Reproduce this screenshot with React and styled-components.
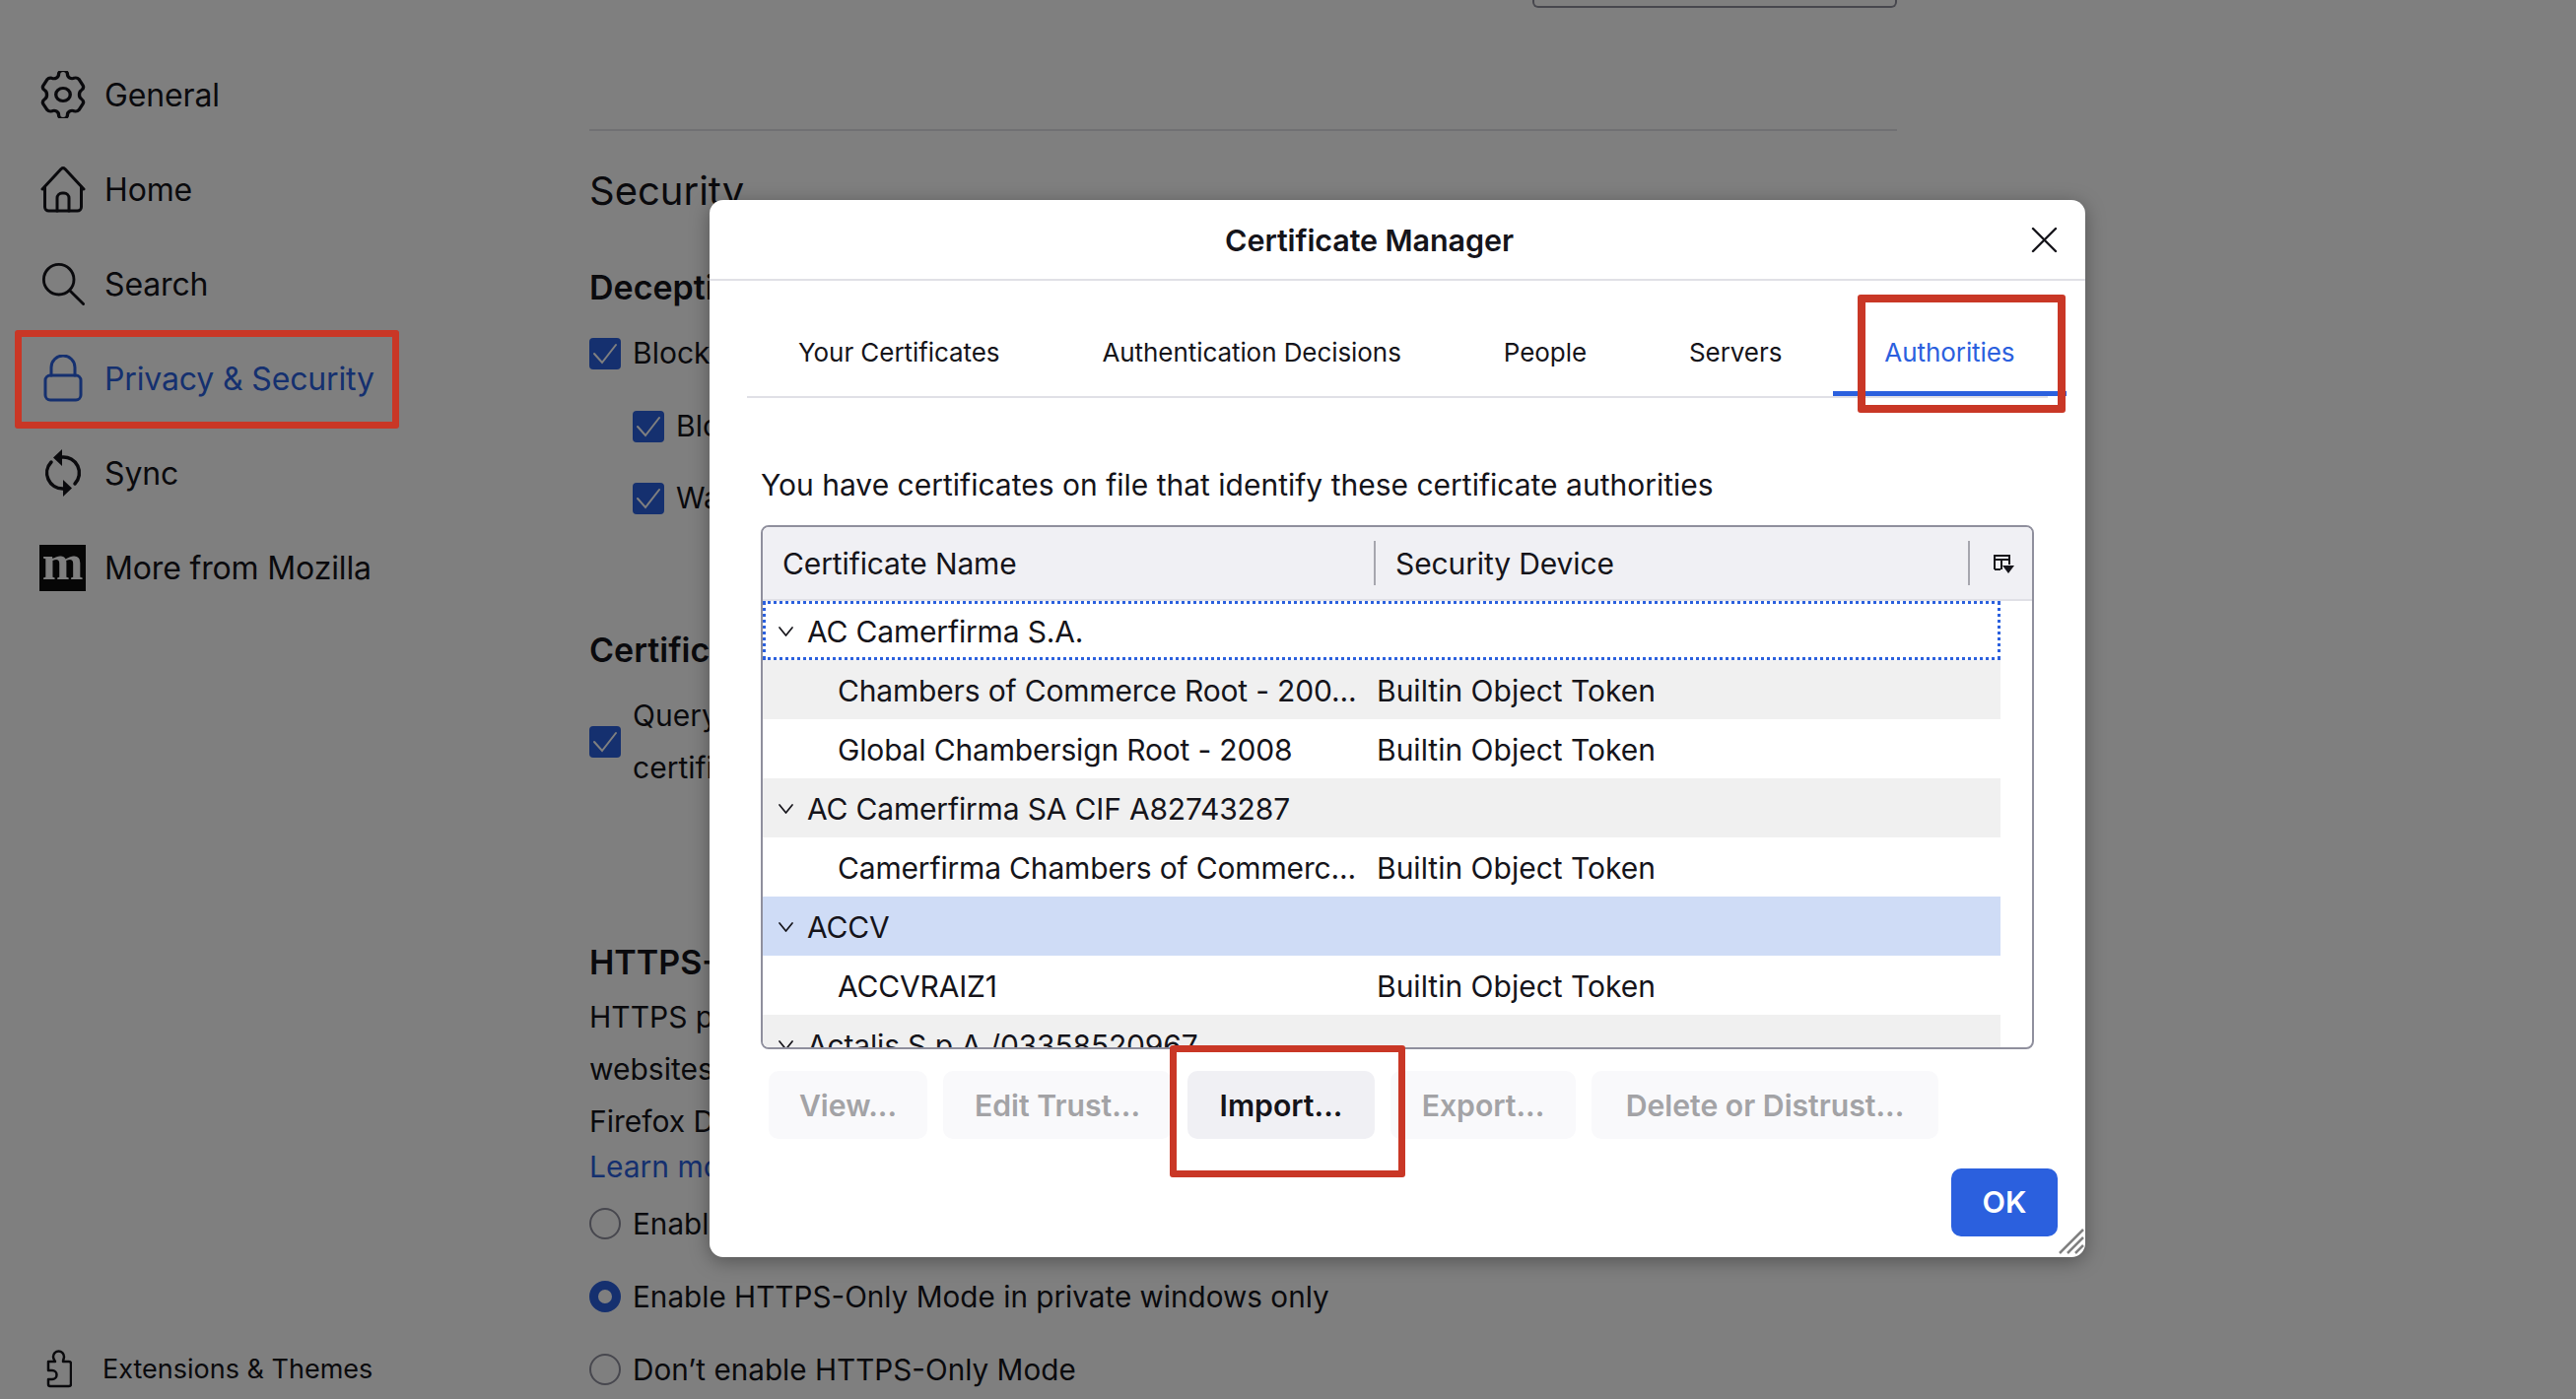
import React from "react";
import styled, { createGlobalStyle } from "styled-components";

const Global = createGlobalStyle`
  html, body { margin: 0; padding: 0; background: #fff; }
  body { font-family: Inter, "Liberation Sans", sans-serif; color: #15141a; }
  * { box-sizing: border-box; }
`;

const Page = styled.div`
  position: relative;
  width: 2614px;
  height: 1420px;
  overflow: hidden;
  background: #fff;
  display: grid;
  grid-template-columns: 598px 1327px 1fr;
`;

const Sidebar = styled.aside`
  display: flex;
  flex-direction: column;
  height: 1420px;
  padding: 48px 0 0 40px;
`;
const Nav = styled.nav`
  display: flex;
  flex-direction: column;
`;
const NavItem = styled.div`
  display: flex;
  align-items: center;
  height: 96px;
  font-size: 32px;
  letter-spacing: -0.15px;
  padding-top: 1px;
  color: ${(p) => (p.$active ? "#2b60de" : "#15141a")};
`;
const NavIcon = styled.span`
  display: flex;
  align-items: center;
  justify-content: center;
  width: 47px;
  height: 60px;
  margin-right: 19px;
  margin-top: -1px;
`;
const MozLogo = styled.span`
  display: flex;
  align-items: center;
  justify-content: center;
  width: 48px;
  height: 47px;
  background: #0c0c0d;
  color: #fff;
  font-family: "Liberation Serif", serif;
  font-weight: 700;
  font-size: 50px;
  line-height: 1;
  letter-spacing: 0;
  padding-bottom: 11px;
`;
const Footer = styled.div`
  margin-top: auto;
  display: flex;
  align-items: center;
  height: 40px;
  margin-bottom: 11px;
  padding-left: 7px;
  font-size: 27px;
  color: #15141a;
`;
const FooterIcon = styled.span`
  display: flex;
  width: 57px;
`;

const Main = styled.main`
  display: flex;
  flex-direction: column;
`;
const TopBox = styled.div`
  align-self: flex-end;
  width: 370px;
  height: 8px;
  border: 2px solid #8f8f9d;
  border-top: none;
  border-radius: 0 0 6px 6px;
`;
const Rule = styled.hr`
  width: 100%;
  height: 2px;
  margin: 123px 0 0;
  border: none;
  background: #e0e0e6;
`;
const H2 = styled.h2`
  margin: 34px 0 0;
  font-weight: 400;
  font-size: 40px;
  line-height: 54px;
`;
const H3 = styled.h3`
  margin: ${(p) => p.$mt || 0}px 0 0;
  font-weight: 600;
  font-size: 34px;
  line-height: 44px;
`;
const Check = styled.div`
  display: flex;
  align-items: center;
  gap: 12px;
  margin: ${(p) => p.$mt || 0}px 0 0 ${(p) => (p.$sub ? 44 : 0)}px;
  font-size: 30px;
  line-height: 53px;
`;
const Box = styled.span`
  flex: none;
  width: 32px;
  height: 32px;
  border-radius: 4px;
  background: #2b60de;
  display: flex;
  align-items: center;
  justify-content: center;
`;
const Para = styled.p`
  margin: ${(p) => p.$mt || 0}px 0 0;
  width: 1300px;
  font-size: 30px;
  line-height: 53px;
`;
const Link = styled.div`
  margin-top: -3px;
  font-size: 30px;
  line-height: 44px;
  color: #2b60de;
`;
const RadioRow = styled.div`
  display: flex;
  align-items: center;
  gap: 12px;
  height: 44px;
  margin-top: ${(p) => p.$mt || 0}px;
  font-size: 29.7px;
`;
const Radio = styled.span`
  flex: none;
  width: 32px;
  height: 32px;
  border-radius: 50%;
  border: ${(p) => (p.$on ? "9px solid #2b60de" : "2px solid #8f8f9d")};
`;

const Overlay = styled.div`
  position: absolute;
  inset: 0;
  background: rgba(0, 0, 0, 0.5);
`;
const Dialog = styled.div`
  position: absolute;
  left: 720px;
  top: 203px;
  width: 1396px;
  height: 1073px;
  background: #fff;
  border-radius: 14px;
  box-shadow: 0 4px 20px rgba(0, 0, 0, 0.35);
  display: flex;
  flex-direction: column;
  overflow: hidden;
`;
const DialogHead = styled.header`
  flex: none;
  height: 82px;
  display: flex;
  align-items: center;
  border-bottom: 2px solid #e0e0e6;
`;
const Title = styled.h1`
  flex: 1;
  margin: 0;
  text-align: center;
  font-size: 30.5px;
  font-weight: 600;
  letter-spacing: -0.1px;
`;
const Close = styled.button`
  flex: none;
  width: 57px;
  height: 40px;
  padding: 0 0 0 2px;
  border: none;
  background: none;
  color: #15141a;
  display: flex;
  align-items: center;
  justify-content: flex-start;
`;
const TabBar = styled.div`
  flex: none;
  display: flex;
  height: 119px;
  width: 1320px;
  margin-left: 38px;
  border-bottom: 2px solid #e0e0e6;
`;
const Tab = styled.div`
  flex: none;
  display: flex;
  align-items: center;
  height: 117px;
  padding: ${(p) => (p.$active ? 32 : 27)}px 52px 0;
  font-size: 26px;
  letter-spacing: -0.07px;
  white-space: nowrap;
  ${(p) => p.$active && "color: #2b60de; border-bottom: 5px solid #2b60de;"}
`;
const Lead = styled.p`
  margin: 68px 0 0 52px;
  font-size: 30px;
  line-height: 40px;
`;
const Tree = styled.div`
  flex: none;
  width: 1292px;
  height: 532px;
  margin: 21px 0 0 52px;
  border: 2px solid #8f8f9d;
  border-radius: 8px;
  overflow: hidden;
`;
const TreeHead = styled.div`
  height: 75px;
  display: flex;
  align-items: center;
  background: #f0f0f4;
  border-bottom: 2px solid #e0e0e6;
  font-size: 30px;
  letter-spacing: -0.12px;
`;
const HeadCell = styled.div`
  flex: none;
  width: ${(p) => p.$w}px;
  padding-left: ${(p) => p.$pad}px;
`;
const HeadRule = styled.span`
  flex: none;
  width: 2px;
  height: 45px;
  background: #a6a6ae;
`;
const HeadIcon = styled.span`
  display: flex;
  margin-left: 24px;
`;
const Rows = styled.div`
  width: 1256px;
`;
const Row = styled.div`
  position: relative;
  display: grid;
  grid-template-columns: 623px 1fr;
  align-items: center;
  height: 60px;
  padding-top: 2px;
  font-size: 30px;
  white-space: nowrap;
  background: ${(p) => (p.$selected ? "#cfdcf6" : p.$striped ? "#f0f0f0" : "#fff")};
  ${(p) => p.$focused && "outline: 3px dotted #2b60de; outline-offset: -3px;"}
`;
const Name = styled.div`
  display: flex;
  align-items: center;
  letter-spacing: -0.17px;
  padding-left: ${(p) => (p.$child ? 76 : 15)}px;
`;
const Chevron = styled.span`
  display: flex;
  width: 30px;
  flex: none;
`;
const Actions = styled.div`
  flex: none;
  display: flex;
  gap: 16px;
  margin: 22px 0 0 60px;
`;
const ActionBtn = styled.button`
  flex: none;
  height: 69px;
  padding: 0;
  width: ${(p) => p.$w}px;
  border: none;
  border-radius: 10px;
  font-family: inherit;
  font-size: 30.2px;
  font-weight: 600;
  background: ${(p) => (p.$disabled ? "#f9f9fb" : "#f0f0f4")};
  color: ${(p) => (p.$disabled ? "#a3a3a6" : "#15141a")};
`;
const DialogFoot = styled.div`
  flex: none;
  display: flex;
  justify-content: flex-end;
  margin: 30px 28px 0 0;
`;
const Ok = styled.button`
  width: 108px;
  height: 69px;
  padding: 0 0 2px;
  border: none;
  border-radius: 10px;
  background: #2b60de;
  color: #fff;
  font-family: inherit;
  font-size: 30.5px;
  font-weight: 600;
`;
const Grip = styled.svg`
  position: absolute;
  right: 1px;
  bottom: 3px;
`;
const Mark = styled.div`
  position: absolute;
  left: ${(p) => p.$x}px;
  top: ${(p) => p.$y}px;
  width: ${(p) => p.$w}px;
  height: ${(p) => p.$h}px;
  border: ${(p) => p.$b || 7}px solid #c93726;
  border-radius: 3px;
`;

const ic = { fill: "none", stroke: "currentColor", strokeWidth: 3, strokeLinecap: "round", strokeLinejoin: "round" };

const Gear = () => (
  <svg width="46" height="48" viewBox="2.500 0 41 48" preserveAspectRatio="none" {...ic}>
    <circle cx="23" cy="24" r="6.5" />
    <path d="M19 3.5a4 4 0 0 1 8 0c0 3.2 3.4 5.2 6.2 3.6a4 4 0 0 1 4.2 1.4l3.6 6.2a4 4 0 0 1-1.3 4.7c-2.7 1.7-2.7 7.5 0 9.2a4 4 0 0 1 1.3 4.7l-3.6 6.2a4 4 0 0 1-4.2 1.4c-2.8-1.6-6.2.4-6.2 3.6a4 4 0 0 1-8 0c0-3.2-3.4-5.2-6.2-3.6a4 4 0 0 1-4.2-1.4L5 33.5a4 4 0 0 1 1.3-4.7c2.7-1.7 2.7-7.500 0-9.2A4 4 0 0 1 5 14.900l3.6-6.2a4 4 0 0 1 4.2-1.4C15.6 8.7 19 6.700 19 3.5z" />
  </svg>
);
const HomeIcon = () => (
  <svg width="46" height="48" viewBox="0 0 46 48" {...ic}>
    <path d="M2 24 21 3.500a3 3 0 0 1 4 0L44 24" />
    <path d="M4.500 22v20a4 4 0 0 0 4 4h29a4 4 0 0 0 4-4V22" />
    <path d="M17 46V33a5 5 0 0 1 5-5h2a5 5 0 0 1 5 5v13" />
  </svg>
);
const SearchIcon = () => (
  <svg width="44" height="44" viewBox="0 0 46 46" {...ic}>
    <circle cx="18.500" cy="18.500" r="16" />
    <path d="m30 30 14.500 14.500" />
  </svg>
);
const LockIcon = () => (
  <svg width="40" height="48" viewBox="0 0 40 48" {...ic}>
    <rect x="2" y="21" width="36" height="25" rx="5" />
    <path d="M8 21V13a12 12 0 0 1 24 0v8" />
  </svg>
);
const SyncIcon = () => (
  <svg width="38" height="48" viewBox="0 0 38 48" fill="none">
    <path d="M18 8A16 16 0 0 1 31 35M19 40A16 16 0 0 1 7 13" stroke="currentColor" strokeWidth="3.500" strokeLinecap="round" />
    <path d="M18 0v17L9 8.500zM19 31v17l9-8.500z" fill="currentColor" />
  </svg>
);
const PuzzleIcon = () => (
  <svg width="26" height="40" viewBox="0 0 26 40" {...ic} strokeWidth="2.500">
    <path d="M2 13h7c-1-2-2-3-2-5a5.500 5.500 0 0 1 11 0c0 2-1 3-1 5h6a2 2 0 0 1 2 2v21a2 2 0 0 1-2 2H4a2 2 0 0 1-2-2v-5h4a4 4 0 0 0 0-9H2z" />
  </svg>
);
const Tick = () => (
  <svg width="26" height="22" viewBox="0 0 26 22" fill="none" stroke="#fff" strokeWidth="2" strokeLinecap="round">
    <path d="m2 11 8 9L24 2" />
  </svg>
);
const CloseIcon = () => (
  <svg width="27" height="27" viewBox="0 0 27 27" stroke="currentColor" strokeWidth="2.400" strokeLinecap="round">
    <path d="m2 2 23 23M25 2 2 25" />
  </svg>
);
const ChevronIcon = () => (
  <svg width="17" height="12" viewBox="0 0 17 12" fill="none" stroke="currentColor" strokeWidth="1.700" strokeLinecap="round" strokeLinejoin="round">
    <path d="m2 2 6.500 8L15 2" />
  </svg>
);
const ColumnPicker = () => (
  <svg width="21" height="20" viewBox="0 0 21 20" fill="none">
    <path d="M1 16V2h15v9M1 6h15M8 6v10M1 16h6" stroke="#15141a" strokeWidth="2" />
    <path d="M9 12h12l-6 8z" fill="#15141a" />
  </svg>
);

const items = [
  { label: "General", icon: <Gear /> },
  { label: "Home", icon: <HomeIcon /> },
  { label: "Search", icon: <SearchIcon /> },
  { label: "Privacy & Security", icon: <LockIcon />, active: true },
  { label: "Sync", icon: <SyncIcon /> },
  { label: "More from Mozilla", icon: <MozLogo>m</MozLogo> },
];

const tabs = ["Your Certificates", "Authentication Decisions", "People", "Servers", "Authorities"];

const rows = [
  { name: "AC Camerfirma S.A.", group: true, focused: true },
  { name: "Chambers of Commerce Root - 200...", device: "Builtin Object Token", striped: true },
  { name: "Global Chambersign Root - 2008", device: "Builtin Object Token" },
  { name: "AC Camerfirma SA CIF A82743287", group: true, striped: true },
  { name: "Camerfirma Chambers of Commerc...", device: "Builtin Object Token" },
  { name: "ACCV", group: true, selected: true },
  { name: "ACCVRAIZ1", device: "Builtin Object Token" },
  { name: "Actalis S.p.A./03358520967", group: true, striped: true },
];

const buttons = [
  { label: "View...", w: 161, disabled: true },
  { label: "Edit Trust...", w: 232, disabled: true },
  { label: "Import...", w: 190 },
  { label: "Export...", w: 188, disabled: true },
  { label: "Delete or Distrust...", w: 352, disabled: true },
];

export default function App() {
  return (
    <Page>
      <Global />
      <Sidebar>
        <Nav>
          {items.map((it) => (
            <NavItem key={it.label} $active={it.active}>
              <NavIcon>{it.icon}</NavIcon>
              {it.label}
            </NavItem>
          ))}
        </Nav>
        <Footer>
          <FooterIcon><PuzzleIcon /></FooterIcon>
          Extensions &amp; Themes
        </Footer>
      </Sidebar>
      <Main>
        <TopBox />
        <Rule />
        <H2>Security</H2>
        <H3 $mt={49}>Deceptive Content and Dangerous Software Protection</H3>
        <Check $mt={18}><Box><Tick /></Box>Block dangerous and deceptive content</Check>
        <Check $mt={21} $sub><Box><Tick /></Box>Block dangerous downloads</Check>
        <Check $mt={20} $sub><Box><Tick /></Box>Warn you about unwanted and uncommon software</Check>
        <H3 $mt={106}>Certificates</H3>
        <Check $mt={18}>
          <Box><Tick /></Box>
          <span>Query OCSP responder servers to confirm the current validity of<br />certificates</span>
        </Check>
        <H3 $mt={149}>HTTPS-Only Mode</H3>
        <Para $mt={7}>
          HTTPS provides a secure, encrypted connection between Firefox and the<br />
          websites you visit. Most websites support HTTPS, and if HTTPS-Only Mode is on, then<br />
          Firefox Desktop will upgrade all connections to HTTPS.
        </Para>
        <Link>Learn more</Link>
        <RadioRow $mt={14}><Radio />Enable HTTPS-Only Mode in all windows</RadioRow>
        <RadioRow $mt={30}><Radio $on />Enable HTTPS-Only Mode in private windows only</RadioRow>
        <RadioRow $mt={30}><Radio />Don’t enable HTTPS-Only Mode</RadioRow>
      </Main>
      <Overlay />
      <Dialog>
        <DialogHead>
          <Title>Certificate Manager</Title>
          <Close aria-label="Close"><CloseIcon /></Close>
        </DialogHead>
        <TabBar>
          {tabs.map((t) => (
            <Tab key={t} $active={t === "Authorities"}>{t}</Tab>
          ))}
        </TabBar>
        <Lead>You have certificates on file that identify these certificate authorities</Lead>
        <Tree>
          <TreeHead>
            <HeadCell $w={620} $pad={20}>Certificate Name</HeadCell>
            <HeadRule />
            <HeadCell $w={601} $pad={20}>Security Device</HeadCell>
            <HeadRule />
            <HeadIcon><ColumnPicker /></HeadIcon>
          </TreeHead>
          <Rows>
            {rows.map((r) => (
              <Row key={r.name} $striped={r.striped} $selected={r.selected} $focused={r.focused}>
                <Name $child={!r.group}>
                  {r.group && <Chevron><ChevronIcon /></Chevron>}
                  {r.name}
                </Name>
                <div>{r.device}</div>
              </Row>
            ))}
          </Rows>
        </Tree>
        <Actions>
          {buttons.map((b) => (
            <ActionBtn key={b.label} $w={b.w} $disabled={b.disabled}>{b.label}</ActionBtn>
          ))}
        </Actions>
        <DialogFoot><Ok>OK</Ok></DialogFoot>
        <Grip width="26" height="26" viewBox="0 0 26 26" stroke="#808080" strokeWidth="2.500">
          <path d="M1 25 25 1M9 25 25 9M17 25l8-8" />
        </Grip>
      </Dialog>
      <Mark $x={15} $y={335} $w={390} $h={100} />
      <Mark $x={1885} $y={299} $w={211} $h={120} $b={8} />
      <Mark $x={1187} $y={1061} $w={239} $h={134} />
    </Page>
  );
}
